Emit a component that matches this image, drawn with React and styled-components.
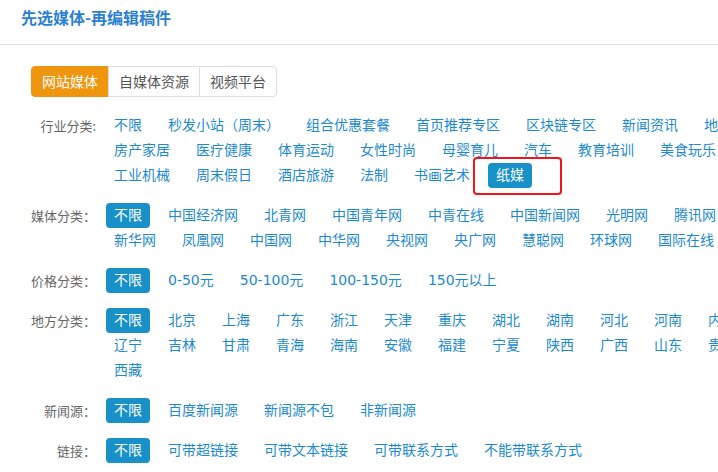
import styled, { createGlobalStyle } from 'styled-components';

const GlobalStyle = createGlobalStyle`
  body {
    margin: 0;
    overflow: hidden;
    background: #fff;
    font-family: "Noto Sans CJK SC", "Noto Sans", sans-serif;
  }
`;

const Page = styled.div`
  width: 800px;
`;

const Header = styled.div`
  height: 45px;
  padding: 0 21px;
  border-bottom: 1px solid #dcdcdc;
  display: flex;
  align-items: center;
  box-sizing: border-box;
`;

const Title = styled.h1`
  margin: 0;
  font-size: 16px;
  font-weight: bold;
  color: #2c7fd2;
  line-height: 20px;
  margin-top: -10px;
`;

const Tabs = styled.div`
  display: flex;
  margin: 21px 0 0 31px;
`;

const Tab = styled.div`
  height: 31px;
  line-height: 29px;
  padding: 0 10px;
  box-sizing: border-box;
  font-size: 14px;
  border: 1px solid ${(p) => (p.$active ? '#f0960e' : '#dddddd')};
  background: ${(p) => (p.$active ? '#f0960e' : '#fff')};
  color: ${(p) => (p.$active ? '#fff' : '#555')};
  margin-left: -1px;

  &:first-child {
    margin-left: 0;
    border-radius: 4px 0 0 4px;
  }
  &:last-child {
    border-radius: 0 4px 4px 0;
  }
`;

const Filters = styled.div`
  margin-top: 16px;
  padding-left: 20px;
`;

const Section = styled.div`
  display: flex;
  align-items: flex-start;
  margin-bottom: 15px;
`;

const Label = styled.div`
  width: 76px;
  flex-shrink: 0;
  text-align: right;
  font-size: 13px;
  line-height: 25px;
  color: #666;
`;

const Items = styled.div`
  width: 664px;
  margin-left: 10px;
  display: flex;
  flex-wrap: wrap;
  column-gap: 10px;
`;

const Item = styled.span`
  position: relative;
  height: 25px;
  line-height: 25px;
  padding: 0 8px;
  font-family: "DejaVu Sans", "Noto Sans CJK SC", sans-serif;
  font-size: 14px;
  border-radius: 4px;
  white-space: nowrap;
  color: ${(p) => (p.$active ? '#fff' : '#1d8ad0')};
  background: ${(p) => (p.$active ? '#1890c8' : 'transparent')};
`;

const Marker = styled.span`
  position: absolute;
  left: -15px;
  right: -30px;
  top: -6px;
  bottom: -7px;
  border: 2.5px solid #f2141a;
  border-radius: 4px;
`;

const filters = [
  {
    label: '行业分类:',
    items: ['不限', '秒发小站（周末）', '组合优惠套餐', '首页推荐专区', '区块链专区', '新闻资讯', '地方资讯',
      '房产家居', '医疗健康', '体育运动', '女性时尚', '母婴育儿', '汽车', '教育培训', '美食玩乐',
      '工业机械', '周末假日', '酒店旅游', '法制', '书画艺术', '纸媒'],
    active: '纸媒',
    marked: '纸媒',
  },
  {
    label: '媒体分类：',
    items: ['不限', '中国经济网', '北青网', '中国青年网', '中青在线', '中国新闻网', '光明网', '腾讯网',
      '新华网', '凤凰网', '中国网', '中华网', '央视网', '央广网', '慧聪网', '环球网', '国际在线'],
    active: '不限',
  },
  {
    label: '价格分类：',
    items: ['不限', '0-50元', '50-100元', '100-150元', '150元以上'],
    active: '不限',
  },
  {
    label: '地方分类：',
    items: ['不限', '北京', '上海', '广东', '浙江', '天津', '重庆', '湖北', '湖南', '河北', '河南', '内蒙古',
      '辽宁', '吉林', '甘肃', '青海', '海南', '安徽', '福建', '宁夏', '陕西', '广西', '山东', '贵州', '西藏'],
    active: '不限',
  },
  {
    label: '新闻源：',
    items: ['不限', '百度新闻源', '新闻源不包', '非新闻源'],
    active: '不限',
  },
  {
    label: '链接：',
    items: ['不限', '可带超链接', '可带文本链接', '可带联系方式', '不能带联系方式'],
    active: '不限',
  },
];

const App = () => {
  return (
    <Page>
      <GlobalStyle />
      <Header>
        <Title>先选媒体-再编辑稿件</Title>
      </Header>
      <Tabs>
        <Tab $active>网站媒体</Tab>
        <Tab>自媒体资源</Tab>
        <Tab>视频平台</Tab>
      </Tabs>
      <Filters>
        {filters.map((f) => (
          <Section key={f.label}>
            <Label>{f.label}</Label>
            <Items>
              {f.items.map((it) => (
                <Item key={it} $active={it === f.active}>
                  {it}
                  {it === f.marked && <Marker />}
                </Item>
              ))}
            </Items>
          </Section>
        ))}
      </Filters>
    </Page>
  );
};

export default App;
